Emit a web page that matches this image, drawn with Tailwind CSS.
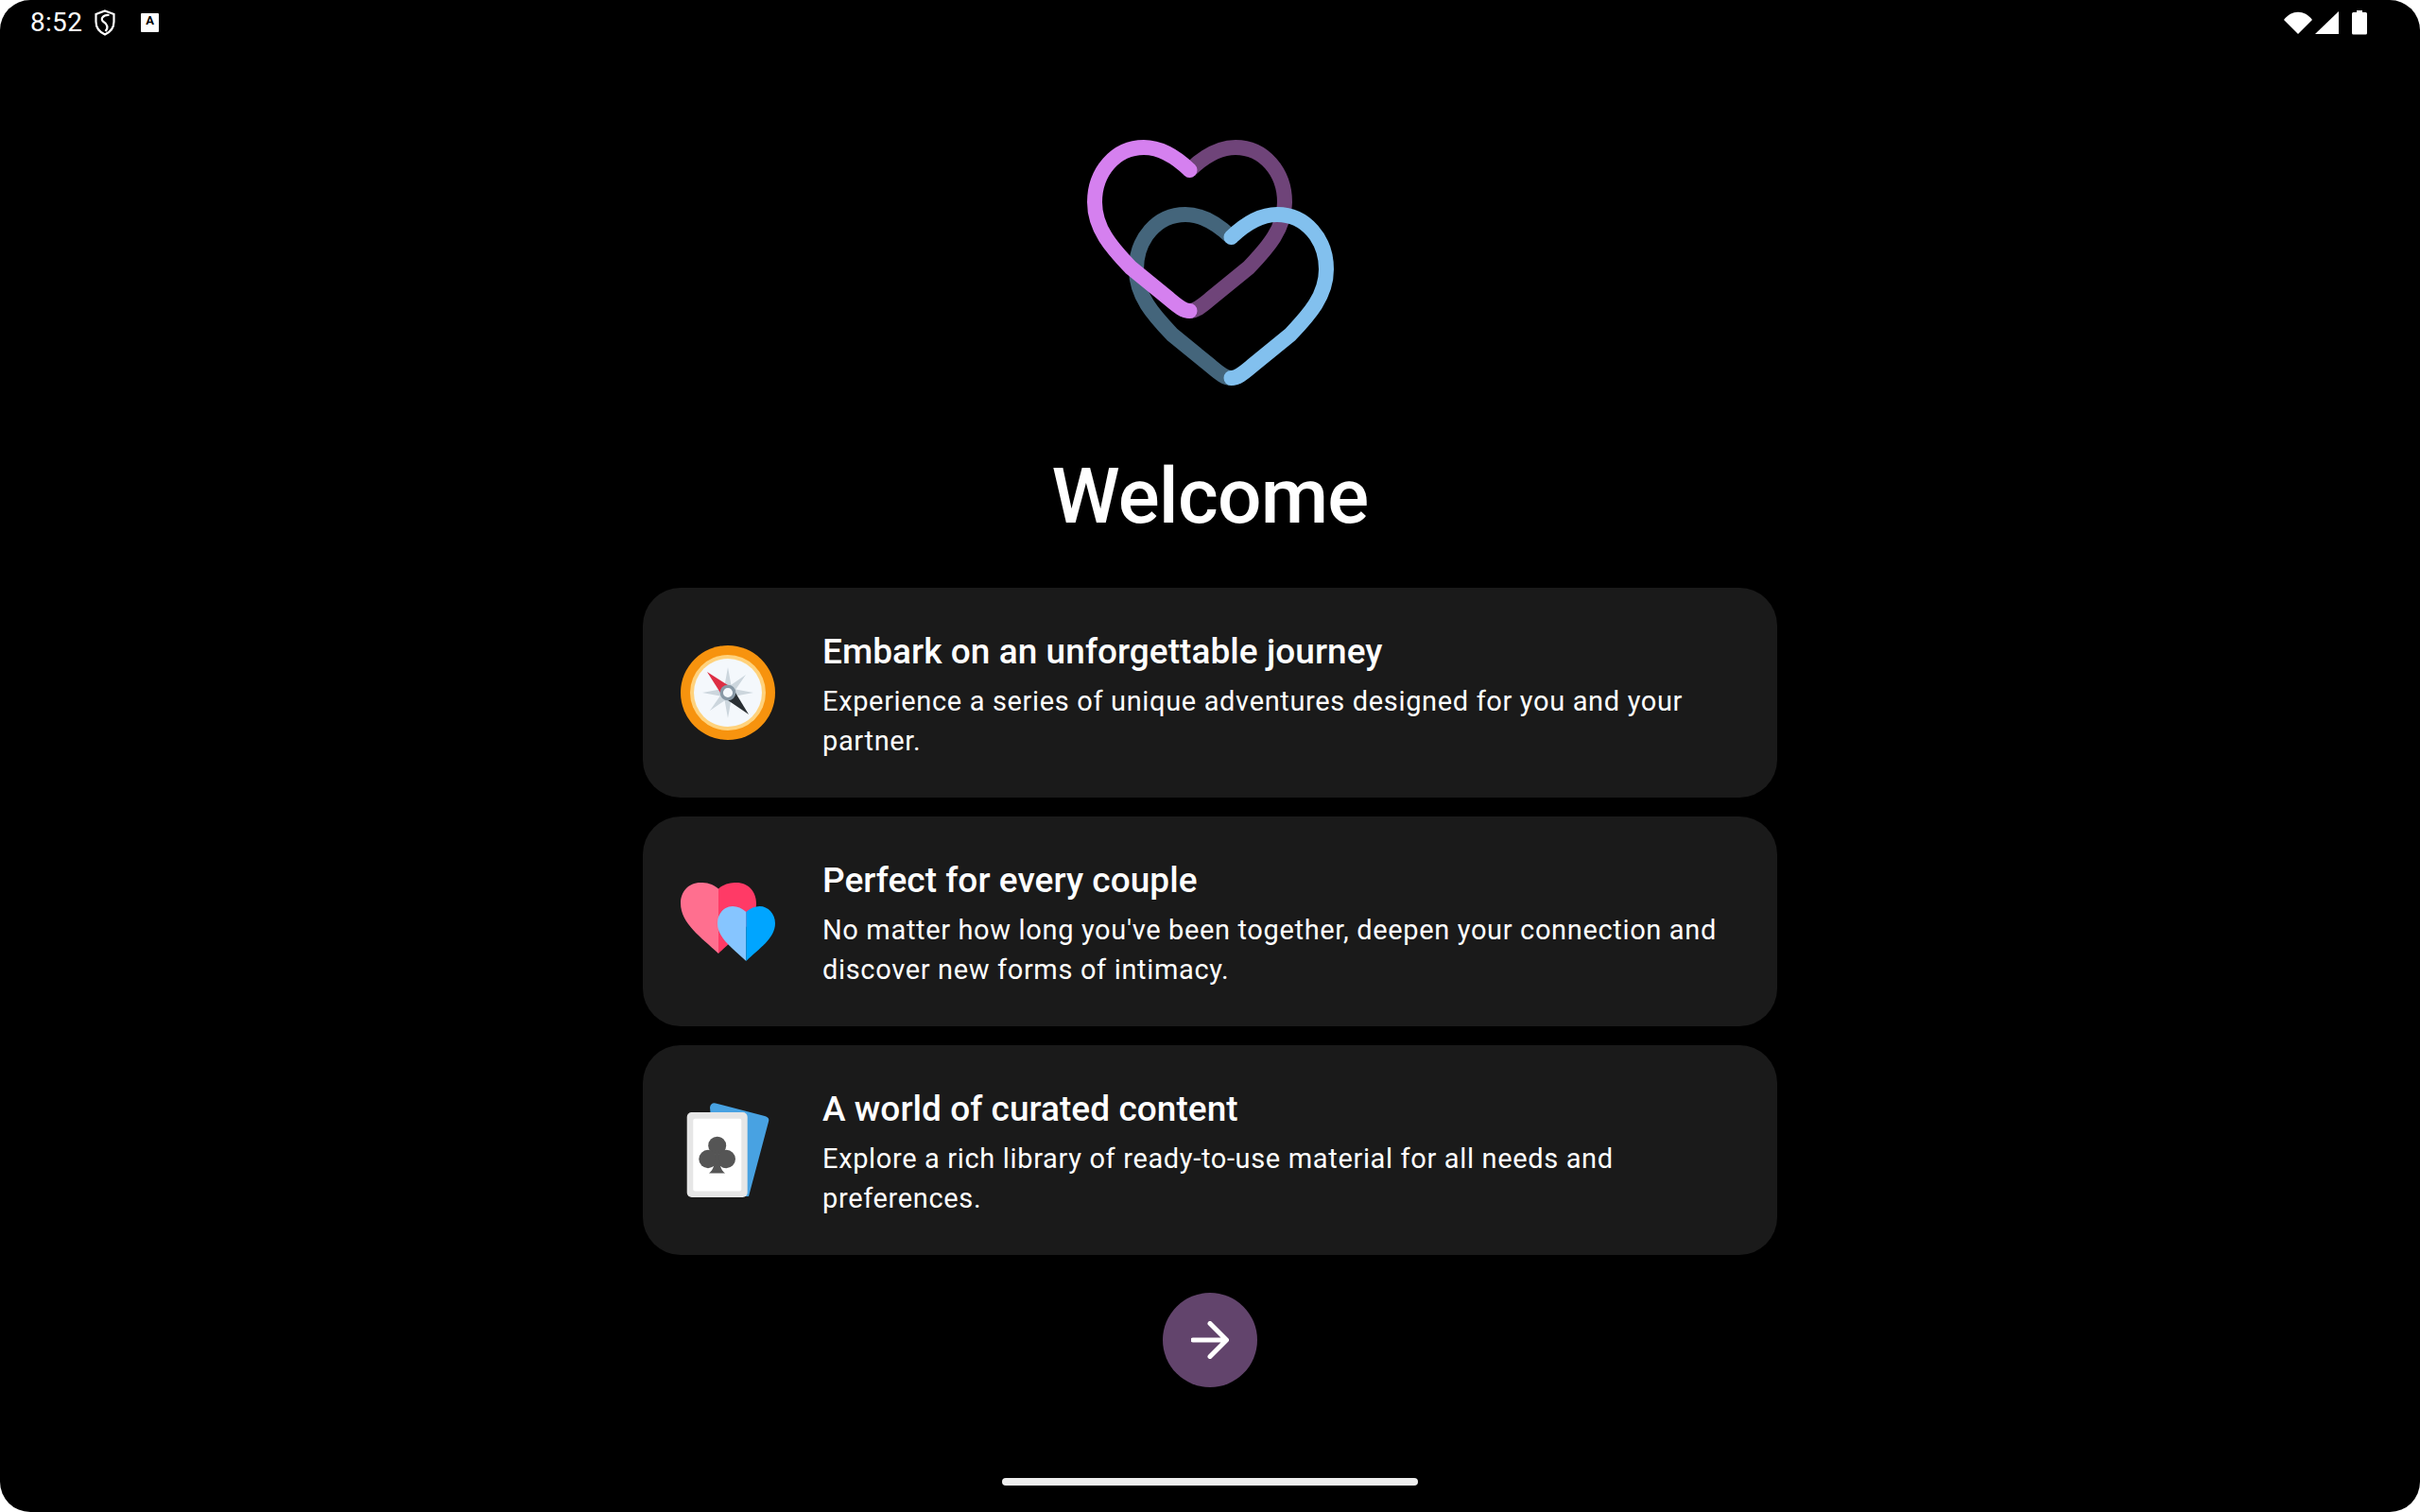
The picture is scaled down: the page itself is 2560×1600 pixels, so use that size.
<!DOCTYPE html>
<html lang="en">
<head>
    <meta charset="UTF-8">
    <title>Welcome</title>
    <script src="https://cdn.jsdelivr.net/npm/@tailwindcss/browser@4"></script>
</head>
<body class="bg-white font-['Roboto',sans-serif] text-white">
    <div class="w-[2560px] h-[1600px] bg-black rounded-[32px] overflow-hidden flex flex-col items-center">
        <!-- status bar -->
        <div class="w-full h-[48px] shrink-0 pl-[32px] pr-[56px] flex items-center justify-between">
            <div class="flex items-center">
                <span class="text-[28px] leading-[48px] w-[68px] tracking-[0.3px]">8:52</span>
                <svg width="22" height="28" viewBox="0 0 22 28" fill="none" stroke="#fff" stroke-width="2.200">
                    <path d="M11 1.500 L20.500 5 V13 C20.500 19.500 16.500 24 11 26.500 C5.500 24 1.500 19.500 1.500 13 V5 Z" />
                    <path d="M15.500 6 C9 5.500 5.500 10 9.500 13 C13.500 15.500 15 19.500 11.500 23" />
                </svg>
                <div class="ml-[27px] w-[19px] h-[20px] bg-white rounded-[1px] flex items-start justify-center">
                    <span class="text-black text-[13px] leading-[15px] font-bold">A</span>
                </div>
            </div>
            <div class="flex items-center">
                <svg width="30" height="24" viewBox="0 0 30 24" fill="#fff"><path d="M0 9 C8 -2 22 -2 30 9 L15 24 Z" /></svg>
                <svg class="ml-[3px]" width="25" height="24" viewBox="0 0 25 24" fill="#fff"><path d="M0 24 L25 0 V24 Z" /></svg>
                <svg class="ml-[14px]" width="16" height="26" viewBox="0 0 16 26" fill="#fff"><path d="M5 0 H11 V2 H14.500 Q16 2 16 3.500 V24 Q16 25.500 14.500 25.500 H1.500 Q0 25.500 0 24 V3.500 Q0 2 1.500 2 H5 Z" /></svg>
            </div>
        </div>

        <!-- logo -->
        <svg class="mt-[82px] shrink-0" width="340" height="290" viewBox="0 0 340 290" fill="none" stroke-width="16" stroke-linecap="round">
            <path stroke="#44657b" transform="translate(44 71)" d="M148.500 50 C135 37 118 26 100 26 C70 26 48 52 48 84 C48 112 66 132 86 153 L124 184 C135 193 141 199 148.500 199" />
            <path stroke="#6f4479" d="M148.500 50 C162 37 179 26 197 26 C227 26 249 52 249 84 C249 112 231 132 211 153 L173 184 C162 193 156 199 148.500 199" />
            <path stroke="#d580ef" d="M148.500 50 C135 37 118 26 100 26 C70 26 48 52 48 84 C48 112 66 132 86 153 L124 184 C135 193 141 199 148.500 199" />
            <path stroke="#82c0ee" transform="translate(44 71)" d="M148.500 50 C162 37 179 26 197 26 C227 26 249 52 249 84 C249 112 231 132 211 153 L173 184 C162 193 156 199 148.500 199" />
        </svg>

        <h1 class="mt-[58px] text-[82px] leading-[94px] font-medium tracking-[-0.8px]">Welcome</h1>

        <!-- cards -->
        <div class="mt-[50px] w-[1200px] flex flex-col gap-[20px]">
            <div class="h-[222px] bg-[#1a1a1a] rounded-[40px] flex items-center px-[40px]">
                <svg class="shrink-0" width="100" height="100" viewBox="0 0 100 100">
                    <circle cx="50" cy="50" r="50" fill="#f7930e" />
                    <circle cx="50" cy="50" r="40" fill="#ffd27c" />
                    <circle cx="50" cy="50" r="36" fill="#f4f8fc" />
                    <path d="M50 23 L53.400 41.700 L69 31 L58.300 46.600 L77 50 L58.300 53.400 L69 69 L53.400 58.300 L50 77 L46.600 58.300 L31 69 L41.700 53.400 L23 50 L41.700 46.600 L31 31 L46.600 41.700 Z" fill="#ccd6dd" />
                    <path d="M28 28 L50 42 L42 50 Z" fill="#dd2e44" />
                    <path d="M72 73 L50 58 L58 50 Z" fill="#292f33" />
                    <circle cx="50" cy="50" r="6.700" fill="#f4f8fc" stroke="#8899a6" stroke-width="3.300" />
                </svg>
                <div class="ml-[50px] min-w-0">
                    <h2 class="text-[37px] leading-[57px] pb-[3px] font-medium tracking-[0.05px]">Embark on an unforgettable journey</h2>
                    <p class="text-[29px] leading-[42px] tracking-[0.65px]">Experience a series of unique adventures designed for you and your partner.</p>
                </div>
            </div>
            <div class="h-[222px] bg-[#1a1a1a] rounded-[40px] flex items-center px-[40px]">
                <svg class="shrink-0" width="100" height="100" viewBox="0 0 100 100">
                    <path d="M40 15.500 C34 10 27 9 21 9 C8 9 0 19 0 31 C0 52 22 67 40 84 Z" fill="#ff6f8f" />
                    <path d="M40 15.500 C46 10 53 9 59 9 C72 9 80 19 80 31 C80 52 58 67 40 84 Z" fill="#ff3a66" />
                    <path d="M69.300 40 C65 36 60 34 55 34 C46 34 39 42 39 52 C39 68 56 79 69.300 92 Z" fill="#86c5ff" />
                    <path d="M69.300 40 C73.600 36 78.600 34 83.600 34 C92.600 34 100 42 100 52 C100 68 82.600 79 69.300 92 Z" fill="#00a5ff" />
                </svg>
                <div class="ml-[50px] min-w-0">
                    <h2 class="text-[37px] leading-[57px] pb-[3px] font-medium tracking-[0.05px]">Perfect for every couple</h2>
                    <p class="text-[29px] leading-[42px] tracking-[0.65px]">No matter how long you've been together, deepen your connection and discover new forms of intimacy.</p>
                </div>
            </div>
            <div class="h-[222px] bg-[#1a1a1a] rounded-[40px] flex items-center px-[40px]">
                <svg class="shrink-0" width="100" height="100" viewBox="0 0 100 100">
                    <path d="M31 5 Q32 -0.500 37 0.500 L89 14 Q94.500 15.500 93 20 L72 99 H40 Z" fill="#48a2e2" />
                    <rect x="6.700" y="10" width="64" height="90" rx="5" fill="#e6e6e6" />
                    <rect x="13.300" y="16.800" width="51" height="76.700" rx="2" fill="#fff" />
                    <circle cx="38.700" cy="45.200" r="9.500" fill="#555" />
                    <circle cx="29" cy="59.500" r="9.700" fill="#555" />
                    <circle cx="48.300" cy="59.500" r="9.700" fill="#555" />
                    <path d="M36.700 50 H40.700 C40.700 64 42 71 47 74.500 H30 C35 71 36.700 64 36.700 50 Z" fill="#555" />
                </svg>
                <div class="ml-[50px] min-w-0">
                    <h2 class="text-[37px] leading-[57px] pb-[3px] font-medium tracking-[0.05px]">A world of curated content</h2>
                    <p class="text-[29px] leading-[42px] tracking-[0.65px]">Explore a rich library of ready-to-use material for all needs and preferences.</p>
                </div>
            </div>
        </div>

        <!-- next button -->
        <button class="mt-[40px] w-[100px] h-[100px] rounded-full bg-[#62446c] flex items-center justify-center">
            <svg width="40" height="40" viewBox="0 0 40 40" fill="none" stroke="#fff" stroke-width="5" stroke-linecap="round" stroke-linejoin="round">
                <path d="M2 20 H37 M20 2.500 L37.500 20 L20 37.500" />
            </svg>
        </button>

        <!-- home indicator -->
        <div class="mt-[96px] w-[440px] h-[8px] rounded-full bg-[#eeeeee]"></div>
    </div>
</body>
</html>
